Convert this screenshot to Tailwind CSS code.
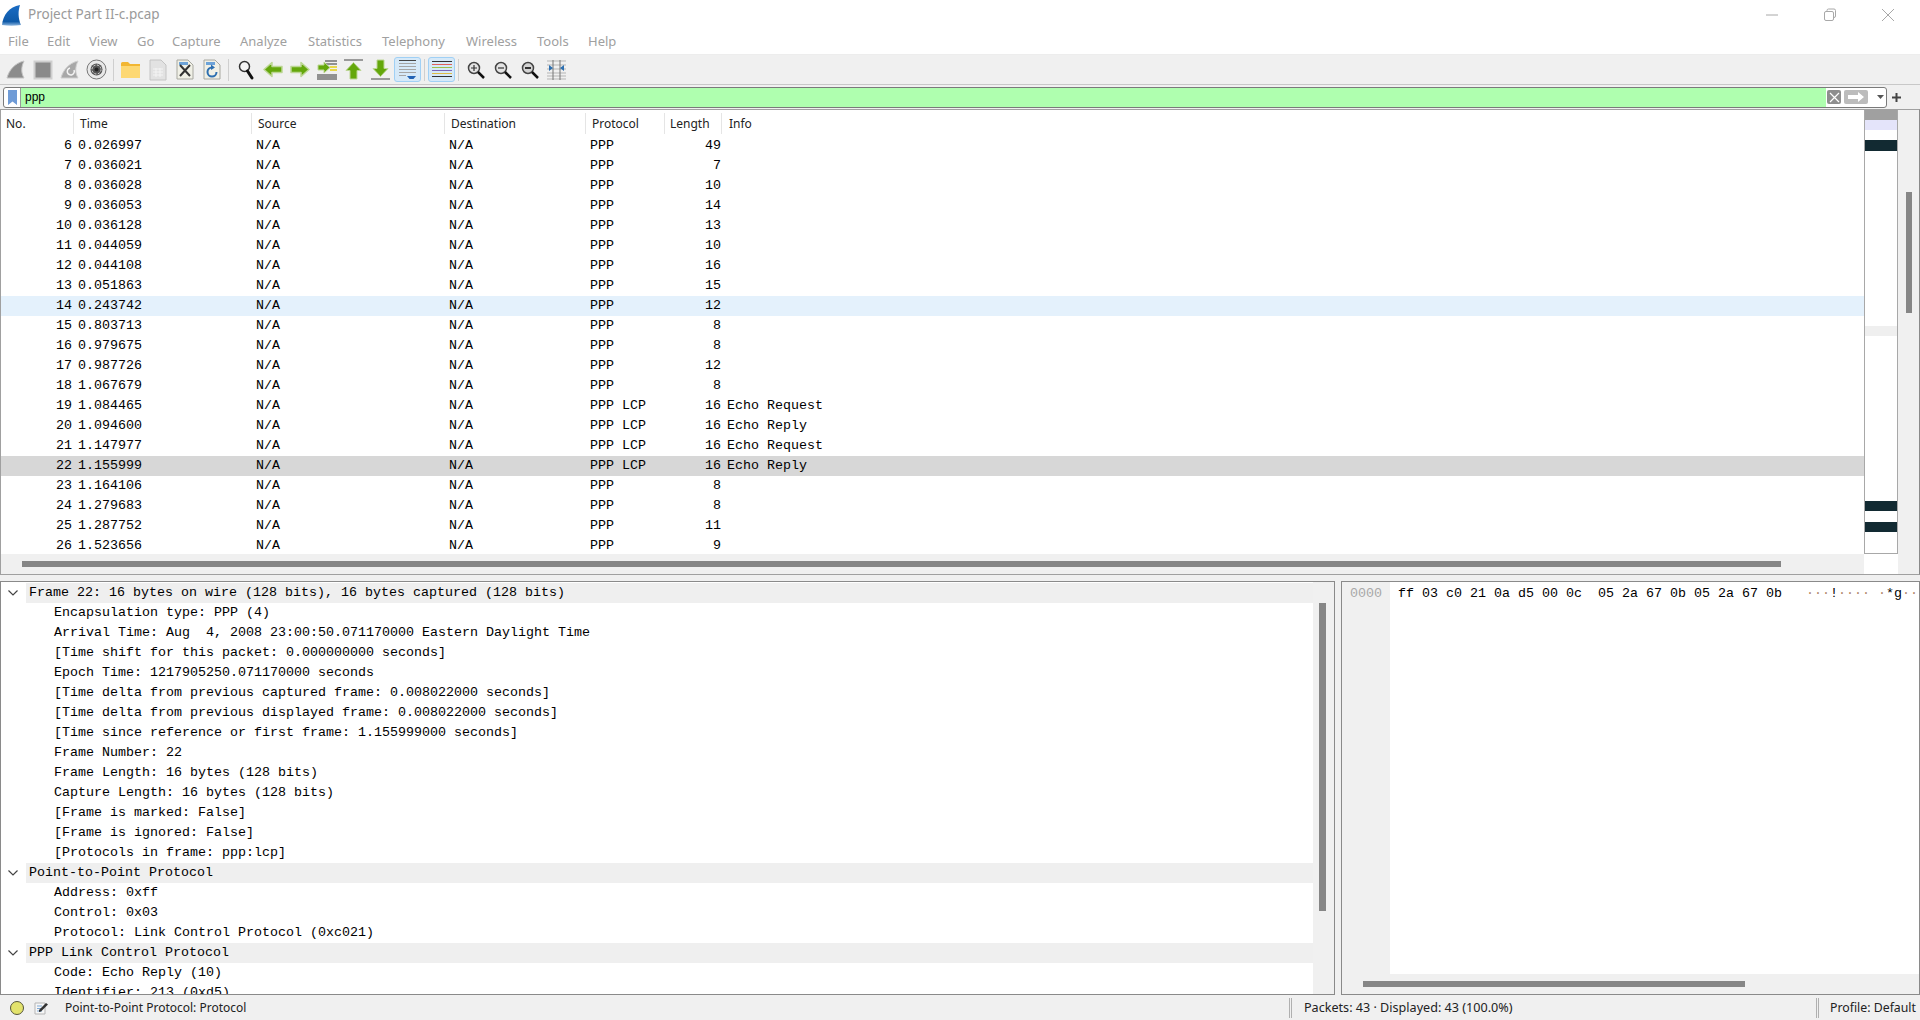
<!DOCTYPE html>
<html lang="en">
<head>
    <meta charset="UTF-8">
    <title>Project Part II-c.pcap</title>
    <script src="https://cdn.jsdelivr.net/npm/@tailwindcss/browser@4"></script>
</head>
<body class="bg-[#f0f0f0] overflow-hidden">
<div class="w-[1920px] h-[1020px] flex flex-col font-['Noto_Sans','Open_Sans',sans-serif] text-black">

    <!-- Title bar -->
    <div class="h-[30px] bg-white flex items-center shrink-0">
        <svg class="ml-[2px] w-[21px] h-[21px]" viewBox="0 0 21 21">
            <defs><linearGradient id="fin" x1="0" y1="0" x2="0" y2="1"><stop offset="0" stop-color="#1a6cc4"/><stop offset="0.8" stop-color="#0f5aa8"/><stop offset="1" stop-color="#8fb8e0"/></linearGradient></defs>
            <path d="M0 20C1 10 7 2 18 0C16 6 16 13 19 20C13 21 6 21 0 20Z" fill="url(#fin)"/>
        </svg>
        <span class="ml-[5px] text-[13.5px] text-[#9a9a9a] mt-[-1px] whitespace-nowrap">Project Part II-c.pcap</span>
        <div class="ml-auto flex items-center">
            <svg class="w-[14px] h-[14px] mr-[44px]" viewBox="0 0 14 14"><path d="M1 7H13" stroke="#a8a8a8" stroke-width="1"/></svg>
            <svg class="w-[14px] h-[14px] mr-[44px]" viewBox="0 0 14 14" fill="none" stroke="#a8a8a8"><rect x="1.5" y="3.5" width="9" height="9" rx="1.5"/><path d="M4 3V2.5A1.5 1.5 0 0 1 5.5 1H11A1.5 1.5 0 0 1 12.500 2.500V8A1.500 1.500 0 0 1 11 9.500"/></svg>
            <svg class="w-[14px] h-[14px] mr-[25px]" viewBox="0 0 14 14"><path d="M1 1L13 13M13 1L1 13" stroke="#a8a8a8"/></svg>
        </div>
    </div>

    <!-- Menu bar -->
    <div class="h-[24px] bg-white flex items-center pl-[8px] text-[13px] text-[#a0a0a0] border-b border-[#ededed] shrink-0 box-content">
        <span class="w-[39px]">File</span>
        <span class="w-[42px]">Edit</span>
        <span class="w-[48px]">View</span>
        <span class="w-[35px]">Go</span>
        <span class="w-[68px]">Capture</span>
        <span class="w-[68px]">Analyze</span>
        <span class="w-[74px]">Statistics</span>
        <span class="w-[84px]">Telephony</span>
        <span class="w-[71px]">Wireless</span>
        <span class="w-[51px]">Tools</span>
        <span>Help</span>
    </div>

    <!-- Toolbar -->
    <div class="h-[29px] flex items-center pl-[2px] border-b border-[#c8c8c8] shrink-0 box-content">
        <span class="w-[27px] flex justify-center"><svg class="w-[20px] h-[20px]" viewBox="0 0 20 20"><path d="M1 18C3 10 9 3 18 1C15 7 15 13 18 18Z" fill="#8c8c8c" stroke="#c4c4c4"/></svg></span>
        <span class="w-[27px] flex justify-center"><svg class="w-[20px] h-[20px]" viewBox="0 0 20 20"><rect x="1.500" y="1.500" width="17" height="17" fill="#8a8a8a" stroke="#cfcfcf" stroke-width="2"/></svg></span>
        <span class="w-[27px] flex justify-center"><svg class="w-[20px] h-[20px]" viewBox="0 0 20 20"><path d="M1 18C3 10 9 3 18 1C15 7 15 13 18 18Z" fill="#a8a8a8" stroke="#cfcfcf"/><path d="M14 10A3.500 3.500 0 1 1 10 8" fill="none" stroke="#f4f4f4" stroke-width="1.500"/></svg></span>
        <span class="w-[27px] flex justify-center"><svg class="w-[21px] h-[21px]" viewBox="0 0 21 21"><circle cx="10.500" cy="10.500" r="9.500" fill="#e8e8e8" stroke="#777"/><circle cx="10.500" cy="10.500" r="6" fill="#555"/><circle cx="10.500" cy="10.500" r="4.500" fill="none" stroke="#e8e8e8" stroke-width="1" stroke-dasharray="2 1.500"/><circle cx="10.500" cy="10.500" r="2" fill="#222"/></svg></span>
        <span class="w-[7px] flex justify-center"><i class="block w-px h-[22px] bg-[#cfcfcf]"></i></span>
        <span class="w-[27px] flex justify-center"><svg class="w-[19px] h-[17px]" viewBox="0 0 19 17"><path d="M0 2.500A1.500 1.500 0 0 1 1.500 1H7L9 3H19V16H0Z" fill="#f2b632"/><rect x="0" y="5" width="19" height="12" fill="#fdd873"/></svg></span>
        <span class="w-[27px] flex justify-center"><svg class="w-[18px] h-[22px]" viewBox="0 0 18 22"><path d="M1 1H12L17 6V21H1Z" fill="#e2e2e2" stroke="#c4c4c4"/><path d="M4 10H14M4 13H14M4 16H14M7 9V18M11 9V18" stroke="#f4f4f4"/></svg></span>
        <span class="w-[27px] flex justify-center"><svg class="w-[18px] h-[21px]" viewBox="0 0 18 21"><path d="M1 1H12L17 6V20H1Z" fill="#f0f0e6" stroke="#a8a8a0"/><path d="M3 3H12V6H3Z" fill="#6da3d8"/><path d="M4 6L14 17M14 6L4 17" stroke="#333" stroke-width="2"/></svg></span>
        <span class="w-[27px] flex justify-center"><svg class="w-[18px] h-[21px]" viewBox="0 0 18 21"><path d="M1 1H12L17 6V20H1Z" fill="#f0f0e6" stroke="#a8a8a0"/><path d="M3 3H12V6H3Z" fill="#6da3d8"/><path d="M13.500 13A4.500 4.500 0 1 1 9 8.500" fill="none" stroke="#2d6fb0" stroke-width="2"/><path d="M8 5.500L12 8.500L8 11Z" fill="#2d6fb0"/></svg></span>
        <span class="w-[7px] flex justify-center"><i class="block w-px h-[22px] bg-[#cfcfcf]"></i></span>
        <span class="w-[27px] flex justify-center"><svg class="w-[16px] h-[20px]" viewBox="0 0 16 20"><circle cx="6.500" cy="6.500" r="5" fill="#f4f4f4" stroke="#333" stroke-width="1.500"/><path d="M9.500 11L14 18" stroke="#111" stroke-width="3" stroke-linecap="round"/></svg></span>
        <span class="w-[27px] flex justify-center"><svg class="w-[20px] h-[17px]" viewBox="0 0 20 17"><path d="M1 8.500L9 1.500V5.500H19V11.500H9V15.500Z" fill="#64a70b" stroke="#bcd694" stroke-width="1.500" stroke-linejoin="round"/></svg></span>
        <span class="w-[27px] flex justify-center"><svg class="w-[20px] h-[17px]" viewBox="0 0 20 17"><path d="M19 8.500L11 1.500V5.500H1V11.500H11V15.500Z" fill="#64a70b" stroke="#bcd694" stroke-width="1.500" stroke-linejoin="round"/></svg></span>
        <span class="w-[27px] flex justify-center"><svg class="w-[20px] h-[20px]" viewBox="0 0 20 20"><path d="M8 1H20M8 4H20M0 15H20M0 17H20M0 19H20" stroke="#333"/><path d="M13 7H20M13 10H20" stroke="#e8d84a" stroke-width="2"/><path d="M1 5H7V2L13 7.500L7 13V10H1Z" fill="#64a70b" stroke="#bcd694"/></svg></span>
        <span class="w-[27px] flex justify-center"><svg class="w-[19px] h-[21px]" viewBox="0 0 19 21"><path d="M0 1H19" stroke="#9a9a9a" stroke-width="2"/><path d="M9.500 3.500L17 11.500H13V20H6V11.500H2Z" fill="#64a70b" stroke="#bcd694" stroke-linejoin="round"/></svg></span>
        <span class="w-[27px] flex justify-center"><svg class="w-[19px] h-[21px]" viewBox="0 0 19 21"><path d="M0 20H19" stroke="#9a9a9a" stroke-width="2"/><path d="M9.500 17.500L17 9.500H13V1H6V9.500H2Z" fill="#64a70b" stroke="#bcd694" stroke-linejoin="round"/></svg></span>
        <span class="w-[27px] h-[25px] flex justify-center items-center bg-[#d6e9f8] border border-[#a0d0f5] rounded-[3px]"><svg class="w-[19px] h-[21px]" viewBox="0 0 19 21"><path d="M1 1.500H18" stroke="#444"/><path d="M1 4.500H18M1 7.500H18M1 10.500H18M1 13.500H18M1 16.500H8" stroke="#a5a5a5"/><path d="M9 17H18L15.500 20H11.500Z" fill="#2262b4"/></svg></span>
        <span class="w-[7px] flex justify-center"><i class="block w-px h-[22px] bg-[#cfcfcf]"></i></span>
        <span class="w-[27px] h-[25px] flex justify-center items-center bg-[#d6e9f8] border border-[#a0d0f5] rounded-[3px]"><svg class="w-[20px] h-[20px]" viewBox="0 0 20 20"><path d="M0 1.500H20" stroke="#333"/><path d="M0 4.500H20" stroke="#e0605a"/><path d="M0 7.500H20" stroke="#9cc04c"/><path d="M0 10.500H20" stroke="#7a68b8"/><path d="M0 13.500H20" stroke="#dfbc44"/><path d="M0 16.500H20" stroke="#333"/></svg></span>
        <span class="w-[7px] flex justify-center"><i class="block w-px h-[22px] bg-[#cfcfcf]"></i></span>
        <span class="w-[27px] flex justify-center"><svg class="w-[18px] h-[18px]" viewBox="0 0 18 18"><circle cx="7" cy="7" r="5.500" fill="#e4e4e4" stroke="#444" stroke-width="1.500"/><path d="M4 7H10M7 4V10" stroke="#333" stroke-width="1.200"/><path d="M11 11L17 17" stroke="#111" stroke-width="2.500"/></svg></span>
        <span class="w-[27px] flex justify-center"><svg class="w-[18px] h-[18px]" viewBox="0 0 18 18"><circle cx="7" cy="7" r="5.500" fill="#e4e4e4" stroke="#444" stroke-width="1.500"/><path d="M4 7H10" stroke="#333" stroke-width="1.200"/><path d="M11 11L17 17" stroke="#111" stroke-width="2.500"/></svg></span>
        <span class="w-[27px] flex justify-center"><svg class="w-[18px] h-[18px]" viewBox="0 0 18 18"><circle cx="7" cy="7" r="5.500" fill="#d4d4d4" stroke="#444" stroke-width="1.500"/><path d="M4 7H10" stroke="#333" stroke-width="2"/><path d="M11 11L17 17" stroke="#111" stroke-width="2.500"/></svg></span>
        <span class="w-[27px] flex justify-center"><svg class="w-[19px] h-[20px]" viewBox="0 0 19 20"><path d="M0 1H19M0 19H19M0 5H19M0 9H19M0 13H19M0 16H19" stroke="#b5b5b5"/><path d="M6 0V20M13 0V20" stroke="#777"/><path d="M2 5L6 8L2 11ZM17 5L13 8L17 11Z" fill="#2d6fb0"/></svg></span>
    </div>

    <!-- Display filter -->
    <div class="h-[24px] flex items-center pl-[3px] shrink-0">
        <div class="w-[1884px] h-[21px] flex border border-[#7a7a7a] rounded-[3px] overflow-hidden bg-white">
            <div class="w-[17px] flex justify-center items-center border-r border-[#9a9a9a]">
                <svg class="w-[9px] h-[15px]" viewBox="0 0 9 15"><path d="M0 0H9V15L4.500 11.500L0 15Z" fill="#6f9bd6"/></svg>
            </div>
            <div class="flex-1 bg-[#afffaf] pl-[4px] font-['Liberation_Sans',sans-serif] text-[12px] leading-[18px]">ppp</div>
            <div class="flex items-center gap-[3px] w-[60px]">
                <span class="w-[14px] h-[14px] ml-[1px] bg-[#8e8e8e] rounded-[2px] flex items-center justify-center"><svg class="w-[11px] h-[11px]" viewBox="0 0 11 11"><path d="M1 1L10 10M10 1L1 10" stroke="#fff" stroke-width="1.200"/></svg></span>
                <span class="w-[24px] h-[14px] bg-[#bcbcbc] rounded-[2px] flex items-center justify-center"><svg class="w-[16px] h-[10px]" viewBox="0 0 16 10"><path d="M0 3H10V0L16 5L10 10V7H0Z" fill="#fff"/></svg></span>
                <svg class="ml-[6px] w-[7px] h-[4px]" viewBox="0 0 7 4"><path d="M0 0H7L3.500 4Z" fill="#555"/></svg>
            </div>
        </div>
        <svg class="ml-[5px] w-[9px] h-[9px]" viewBox="0 0 9 9"><path d="M4.500 0V9M0 4.500H9" stroke="#444" stroke-width="2"/></svg>
    </div>

    <!-- Packet list pane -->
    <div class="h-[466px] flex border-y border-[#a0a0a0] border-l bg-white shrink-0 border-r-[#8a8a8a] border-r">
        <div class="w-[1863px] flex flex-col min-w-0">
            <div class="h-[26px] flex text-[12px] items-center shrink-0 text-[#222]">
                <span class="w-[73px] pl-[5px] h-[21px] leading-[21px] border-r border-[#e5e5e5]">No.</span>
                <span class="w-[178px] pl-[6px] h-[21px] leading-[21px] border-r border-[#e5e5e5]">Time</span>
                <span class="w-[193px] pl-[6px] h-[21px] leading-[21px] border-r border-[#e5e5e5]">Source</span>
                <span class="w-[141px] pl-[6px] h-[21px] leading-[21px] border-r border-[#e5e5e5]">Destination</span>
                <span class="w-[79px] pl-[6px] h-[21px] leading-[21px] border-r border-[#e5e5e5]">Protocol</span>
                <span class="w-[57px] pl-[5px] h-[21px] leading-[21px] border-r border-[#e5e5e5]">Length</span>
                <span class="pl-[7px] h-[21px] leading-[21px]">Info</span>
            </div>
            <div id="packets" class="flex-1 overflow-hidden font-['Liberation_Mono',monospace] text-[13.33px] leading-[20px]"></div>
            <div class="h-[20px] bg-[#f0f0f0] flex items-center shrink-0 pl-[21px]">
                <i class="block w-[1759px] h-[6px] bg-[#868686]"></i>
            </div>
        </div>
        <div class="w-[34px] border-x border-b border-[#a8a8a8] flex flex-col shrink-0 h-[444px] bg-white">
            <i class="block h-[10px] bg-[#a0a0a0]"></i>
            <i class="block h-[10px] bg-[#e4e4fa]"></i>
            <i class="block h-[10px]"></i>
            <i class="block h-[11px] bg-[#122a32]"></i>
            <i class="block h-[175px]"></i>
            <i class="block h-[10px] bg-[#efefef]"></i>
            <i class="block h-[165px]"></i>
            <i class="block h-[10px] bg-[#122a32]"></i>
            <i class="block h-[11px]"></i>
            <i class="block h-[10px] bg-[#122a32]"></i>
        </div>
        <div class="flex-1 bg-[#f0f0f0] pl-[8px] pt-[82px]">
            <i class="block w-[6px] h-[121px] bg-[#868686]"></i>
        </div>
    </div>

    <div class="h-[6px] shrink-0"></div>

    <!-- Bottom panes -->
    <div class="h-[414px] flex shrink-0">
        <!-- Packet details -->
        <div class="w-[1335px] flex border border-[#8a8a8a] bg-white overflow-hidden">
            <div id="details" class="flex-1 h-[412px] pt-[1px] overflow-hidden font-['Liberation_Mono',monospace] text-[13.33px] leading-[20px] min-w-0"></div>
            <div class="w-[21px] bg-[#f0f0f0] pl-[6px] pt-[21px] shrink-0">
                <i class="block w-[7px] h-[308px] bg-[#868686]"></i>
            </div>
        </div>
        <div class="w-[6px] shrink-0"></div>
        <!-- Packet bytes -->
        <div class="flex-1 flex flex-col border border-[#8a8a8a] bg-white min-w-0">
            <div class="flex-1 flex font-['Liberation_Mono',monospace] text-[13.33px] leading-[20px] min-h-0">
                <div class="w-[48px] bg-[#f0f0f0] text-[#a8a8a8] pl-[8px] pt-[2px] shrink-0">0000</div>
                <div class="pl-[8px] pt-[2px] whitespace-pre overflow-hidden">ff 03 c0 21 0a d5 00 0c  05 2a 67 0b 05 2a 67 0b   <span class="text-[#b08a6a]">···</span>!<span class="text-[#b08a6a]">····</span> <span class="text-[#b08a6a]">·</span>*g<span class="text-[#b08a6a]">··</span></div>
            </div>
            <div class="h-[20px] bg-[#f0f0f0] pl-[21px] pt-[7px] shrink-0">
                <i class="block w-[382px] h-[6px] bg-[#868686]"></i>
            </div>
        </div>
    </div>

    <!-- Status bar -->
    <div class="flex-1 flex items-center text-[12px] text-[#222] pt-[1px]">
        <span class="ml-[10px] w-[14px] h-[14px] rounded-full bg-[#e3e36c] border border-[#55553a]"></span>
        <svg class="ml-[10px] w-[14px] h-[14px]" viewBox="0 0 14 14"><path d="M1 2H11V13H1Z" fill="#f6f6f6" stroke="#b5b5b5"/><path d="M3 5H8M3 7.500H7M3 10H8" stroke="#7fa9d6"/><path d="M5 9L12 2L14 3.500L7 10.500L5 11Z" fill="#333"/></svg>
        <span class="ml-[17px] w-[1224px]">Point-to-Point Protocol: Protocol</span>
        <span class="w-[3px] h-[20px] border-x border-[#b0b0b0]"></span>
        <span class="ml-[12px] w-[512px] text-[12.6px]">Packets: 43 · Displayed: 43 (100.0%)</span>
        <span class="w-[3px] h-[20px] border-x border-[#b0b0b0]"></span>
        <span class="ml-[11px] whitespace-nowrap text-[12.3px]">Profile: Default</span>
    </div>
</div>

<script>
    // [no, time, proto, length, info]
    const packets = [
        [6, '0.026997', 'PPP', 49, ''],
        [7, '0.036021', 'PPP', 7, ''],
        [8, '0.036028', 'PPP', 10, ''],
        [9, '0.036053', 'PPP', 14, ''],
        [10, '0.036128', 'PPP', 13, ''],
        [11, '0.044059', 'PPP', 10, ''],
        [12, '0.044108', 'PPP', 16, ''],
        [13, '0.051863', 'PPP', 15, ''],
        [14, '0.243742', 'PPP', 12, ''],
        [15, '0.803713', 'PPP', 8, ''],
        [16, '0.979675', 'PPP', 8, ''],
        [17, '0.987726', 'PPP', 12, ''],
        [18, '1.067679', 'PPP', 8, ''],
        [19, '1.084465', 'PPP LCP', 16, 'Echo Request'],
        [20, '1.094600', 'PPP LCP', 16, 'Echo Reply'],
        [21, '1.147977', 'PPP LCP', 16, 'Echo Request'],
        [22, '1.155999', 'PPP LCP', 16, 'Echo Reply'],
        [23, '1.164106', 'PPP', 8, ''],
        [24, '1.279683', 'PPP', 8, ''],
        [25, '1.287752', 'PPP', 11, ''],
        [26, '1.523656', 'PPP', 9, '']
    ];

    document.getElementById('packets').innerHTML = packets.map(p => {
        let rowBg = '';
        if (p[0] === 14) rowBg = 'bg-[#e4f1fc]';
        if (p[0] === 22) rowBg = 'bg-[#d7d7d7]';
        return `<div class="grid grid-cols-[77px_178px_193px_141px_80px_51px_1fr] h-[20px] ${rowBg}">
            <span class="text-right pr-[6px]">${p[0]}</span>
            <span>${p[1]}</span>
            <span>N/A</span>
            <span>N/A</span>
            <span>${p[2]}</span>
            <span class="text-right">${p[3]}</span>
            <span class="pl-[6px]">${p[4]}</span>
        </div>`;
    }).join('');

    // true = collapsible protocol header, the rest are child fields
    const details = [
        [true, 'Frame 22: 16 bytes on wire (128 bits), 16 bytes captured (128 bits)'],
        [false, 'Encapsulation type: PPP (4)'],
        [false, 'Arrival Time: Aug  4, 2008 23:00:50.071170000 Eastern Daylight Time'],
        [false, '[Time shift for this packet: 0.000000000 seconds]'],
        [false, 'Epoch Time: 1217905250.071170000 seconds'],
        [false, '[Time delta from previous captured frame: 0.008022000 seconds]'],
        [false, '[Time delta from previous displayed frame: 0.008022000 seconds]'],
        [false, '[Time since reference or first frame: 1.155999000 seconds]'],
        [false, 'Frame Number: 22'],
        [false, 'Frame Length: 16 bytes (128 bits)'],
        [false, 'Capture Length: 16 bytes (128 bits)'],
        [false, '[Frame is marked: False]'],
        [false, '[Frame is ignored: False]'],
        [false, '[Protocols in frame: ppp:lcp]'],
        [true, 'Point-to-Point Protocol'],
        [false, 'Address: 0xff'],
        [false, 'Control: 0x03'],
        [false, 'Protocol: Link Control Protocol (0xc021)'],
        [true, 'PPP Link Control Protocol'],
        [false, 'Code: Echo Reply (10)'],
        [false, 'Identifier: 213 (0xd5)']
    ];

    document.getElementById('details').innerHTML = details.map(d => d[0]
        ? `<div class="h-[20px] flex items-center whitespace-pre">
            <svg class="ml-[7px] w-[10px] h-[6px] shrink-0" viewBox="0 0 10 6"><path d="M0.500 0.500L5 5L9.500 0.500" fill="none" stroke="#444" stroke-width="1.200"/></svg>
            <span class="ml-[8px] pl-[3px] flex-1 bg-[#efefef]">${d[1]}</span>
        </div>`
        : `<div class="h-[20px] pl-[53px] whitespace-pre">${d[1]}</div>`
    ).join('');
</script>
</body>
</html>
